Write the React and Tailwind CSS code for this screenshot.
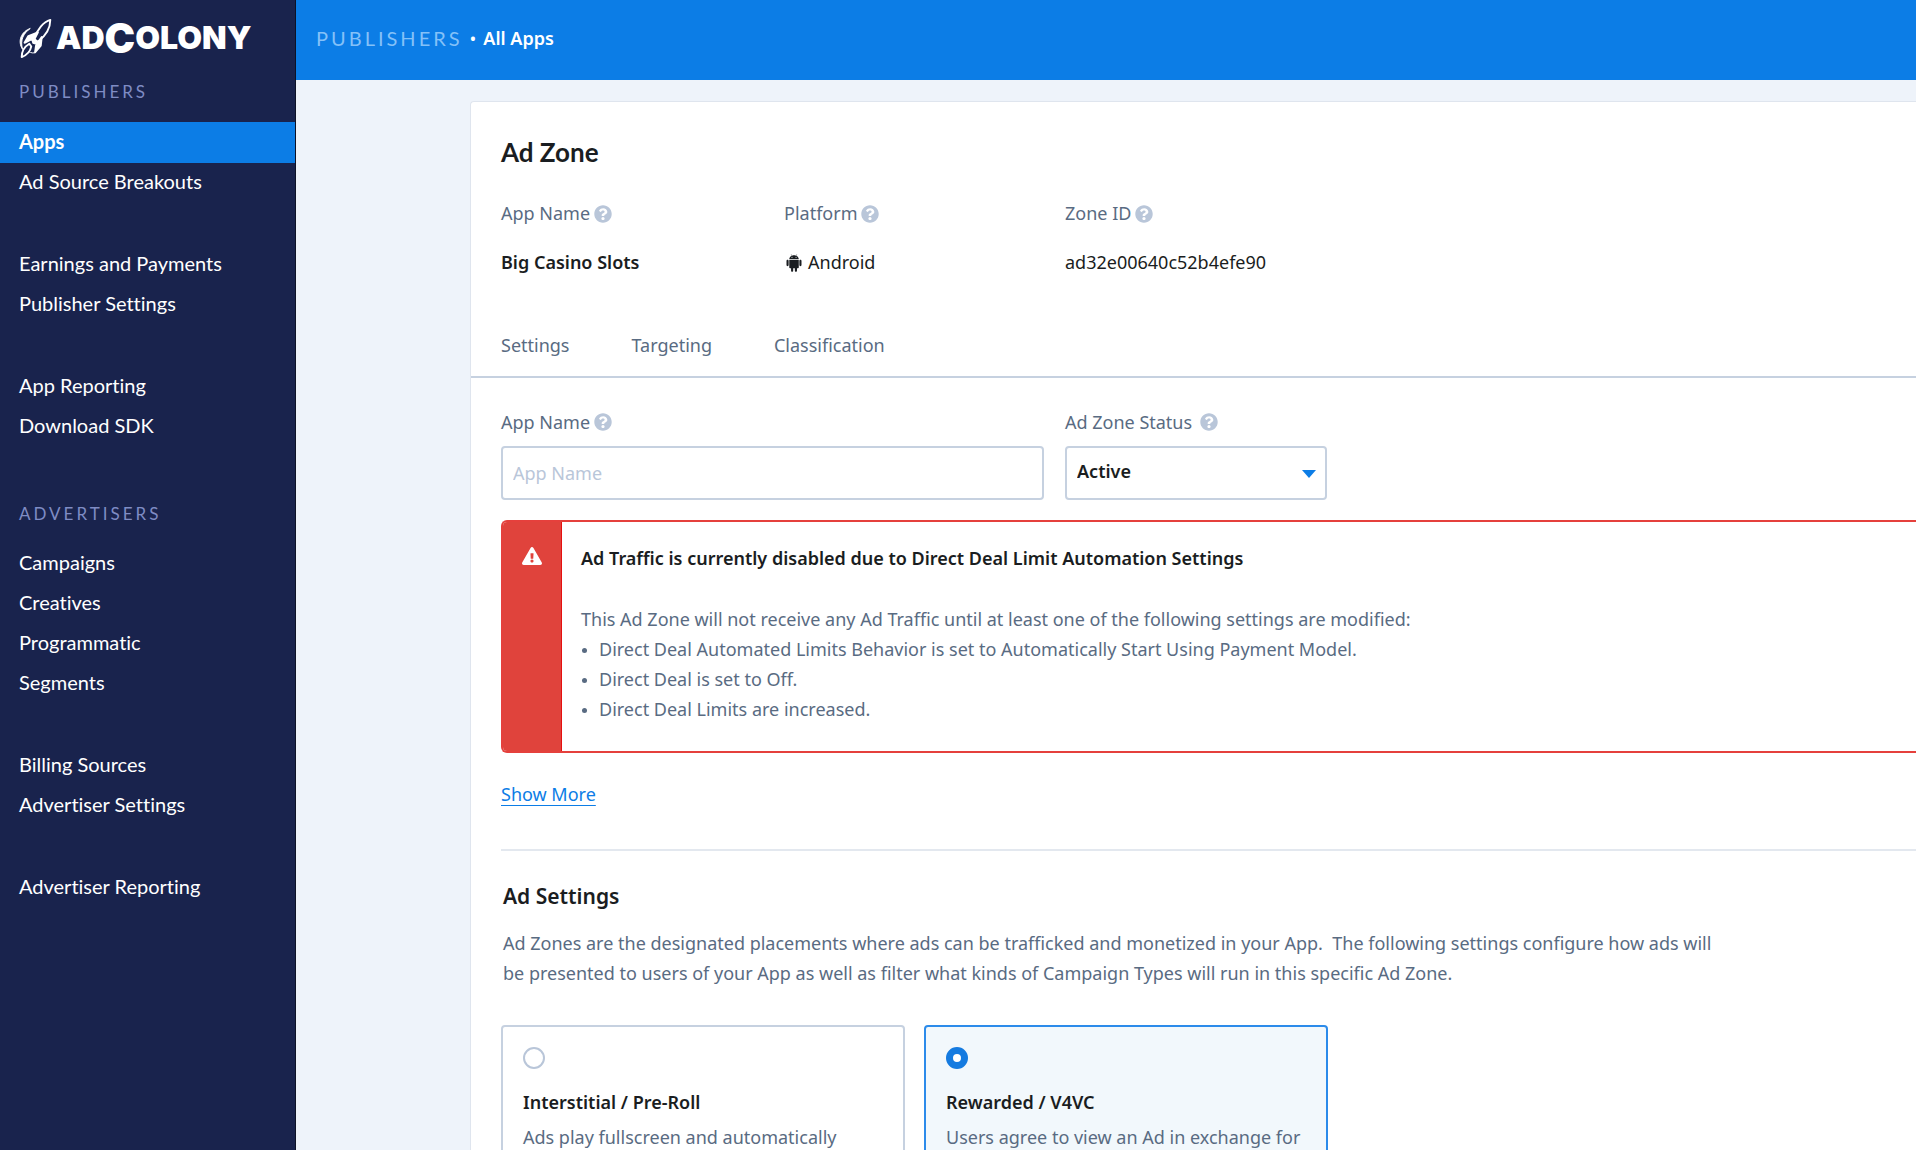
import React, { useState } from 'react';
import { FaQuestionCircle, FaExclamationTriangle } from 'react-icons/fa';
import { AiFillAndroid } from 'react-icons/ai';

const PUBLISHER_GROUPS = [
  ['Apps', 'Ad Source Breakouts'],
  ['Earnings and Payments', 'Publisher Settings'],
  ['App Reporting', 'Download SDK'],
];

const ADVERTISER_GROUPS = [
  ['Campaigns', 'Creatives', 'Programmatic', 'Segments'],
  ['Billing Sources', 'Advertiser Settings'],
  ['Advertiser Reporting'],
];

const AD_TYPES = [
  {
    id: 'interstitial',
    title: 'Interstitial / Pre-Roll',
    text: 'Ads play fullscreen and automatically',
  },
  {
    id: 'rewarded',
    title: 'Rewarded / V4VC',
    text: 'Users agree to view an Ad in exchange for',
  },
];

const Logo = () => (
  <a href="#" className="flex h-[76px] items-center gap-[2px] pl-[18px] text-white" aria-label="AdColony">
    <svg viewBox="0 0 36 44" className="h-[42px] w-9" fill="none" stroke="currentColor" strokeLinejoin="round">
      <path d="M33 3C26 5 19 13 16 23L20 26C28 20 33 12 33 3Z" strokeWidth="2" />
      <path d="M20 16L10 20L6 27L14 23L15 27L21 29L18 30L17 37L23 30L24 21L20 27L16 24Z" fill="currentColor" strokeWidth="2" />
      <path d="M12 12C3 15 -2 25 4 34C1 24 5 17 12 12Z" fill="currentColor" strokeWidth="1" />
      <path d="M11 28C6 31 3 36 3 42C8 40 12 36 13 31Z" strokeWidth="2" />
      <path d="M10 36C13 38 16 38 18 37" strokeWidth="1" />
    </svg>
    <span className="flex items-center font-['Inter',sans-serif] text-[32px] leading-none font-black">
      <span>AD</span>
      <span className="text-[41px] leading-none">C</span>
      <span>OLONY</span>
    </span>
  </a>
);

const NavSection = ({ title, groups, active, onSelect }) => (
  <nav aria-label={title}>
    <h2 className="pl-[19px] text-[17px] leading-8 tracking-[3px] text-[#7f8cc4] uppercase">{title}</h2>
    <div className="flex flex-col gap-[42px] pt-[14px]">
      {groups.map((group) => (
        <ul key={group[0]}>
          {group.map((item) => (
            <li key={item}>
              <a
                href="#"
                onClick={() => onSelect(item)}
                className={
                  item === active
                    ? 'flex h-[41px] items-center bg-[#0c7de6] pb-1 pl-[19px] font-bold'
                    : 'flex h-10 items-center pb-1 pl-[19px]'
                }
              >
                {item}
              </a>
            </li>
          ))}
        </ul>
      ))}
    </div>
  </nav>
);

const Help = () => <FaQuestionCircle className="size-[18px] shrink-0 text-[#b9c6d9]" />;

const Detail = ({ label, children }) => (
  <div>
    <dt className="flex items-center gap-1 text-[#596b82]">
      {label}
      <Help />
    </dt>
    <dd className="mt-[18px] flex items-center gap-1">{children}</dd>
  </div>
);

const App = () => {
  const [activeItem, setActiveItem] = useState('Apps');
  const [appName, setAppName] = useState('');
  const [status, setStatus] = useState('Active');
  const [adType, setAdType] = useState('rewarded');

  return (
    <div className="flex h-screen overflow-hidden bg-[#eef3fa] font-['Noto_Sans',sans-serif] text-lg text-[#1a1d21]">
      {/* Sidebar */}
      <aside className="w-[296px] shrink-0 border-r border-[#0d1226] bg-[#19234d] font-[Lato,sans-serif] text-xl text-white [font-variant-ligatures:none]">
        <Logo />
        <NavSection title="Publishers" groups={PUBLISHER_GROUPS} active={activeItem} onSelect={setActiveItem} />
        <div className="h-[51px]" />
        <NavSection title="Advertisers" groups={ADVERTISER_GROUPS} active={activeItem} onSelect={setActiveItem} />
      </aside>

      <div className="flex min-w-0 flex-1 flex-col">
        <header className="flex h-20 shrink-0 items-center gap-[7px] bg-[#0c7de6] px-5 pb-1 text-white">
          <span className="font-[Lato,sans-serif] text-xl tracking-[3px] text-[#84c1f8] uppercase">Publishers</span>
          <span>•</span>
          <a href="#" className="font-semibold">All Apps</a>
        </header>

        <main className="min-h-0 flex-1 overflow-hidden pt-[21px] pl-[174px]">
          <div className="rounded-tl border-t border-l border-[#dfe5ee] bg-white">
            <div className="pt-[30px] pl-[30px]">
              <h1 className="font-[Lato,sans-serif] text-[26px] leading-10 font-bold">Ad Zone</h1>
              <dl className="mt-[26px] grid grid-cols-[283px_281px_1fr] leading-[31px]">
                <Detail label="App Name">
                  <span className="font-semibold">Big Casino Slots</span>
                </Detail>
                <Detail label="Platform">
                  <AiFillAndroid className="size-5" />
                  Android
                </Detail>
                <Detail label="Zone ID">ad32e00640c52b4efe90</Detail>
              </dl>
            </div>

            {/* Tabs */}
            <div className="mt-9 flex gap-[62px] border-b-2 border-[#c6d1e0] pl-[30px] text-[#596b82]">
              <button type="button" className="h-[62px]">Settings</button>
              <button type="button" className="h-[62px]">Targeting</button>
              <button type="button" className="h-[62px]">Classification</button>
            </div>

            <div className="pt-[29px] pl-[30px] leading-[30px]">
              <div className="flex gap-[21px] text-[#596b82]">
                <div className="w-[543px]">
                  <label htmlFor="app-name" className="flex items-center gap-1">
                    App Name
                    <Help />
                  </label>
                  <input
                    id="app-name"
                    type="text"
                    placeholder="App Name"
                    value={appName}
                    onChange={(e) => setAppName(e.target.value)}
                    className="mt-[9px] h-[54px] w-full rounded border-2 border-[#c6d1e0] px-[10px] placeholder:text-[#b9c6d9]"
                  />
                </div>
                <div className="w-[262px]">
                  <label htmlFor="status" className="flex items-center gap-2">
                    Ad Zone Status
                    <Help />
                  </label>
                  <div className="relative mt-[9px]">
                    <select
                      id="status"
                      value={status}
                      onChange={(e) => setStatus(e.target.value)}
                      className="h-[54px] w-full appearance-none rounded border-2 border-[#c6d1e0] px-[10px] pb-1 font-semibold text-[#1a1d21]"
                    >
                      <option>Active</option>
                      <option>Inactive</option>
                    </select>
                    <svg viewBox="0 0 14 8" className="pointer-events-none absolute top-6 right-[11px] h-2 w-[14px]">
                      <path d="M0 0H14L7 8Z" fill="#0c7de6" />
                    </svg>
                  </div>
                </div>
              </div>

              {/* Disabled traffic warning */}
              <div role="alert" className="mt-5 flex h-[233px] overflow-hidden rounded-l-md border-2 border-r-0 border-[#e5403c]">
                <div className="flex w-[59px] shrink-0 justify-center border-r border-[#e60f0f] bg-[#e0433c] pt-6">
                  <FaExclamationTriangle className="size-5 text-white" />
                </div>
                <div className="pt-[21px] pl-[19px]">
                  <p className="font-semibold">Ad Traffic is currently disabled due to Direct Deal Limit Automation Settings</p>
                  <div className="mt-[31px] text-[#596b82]">
                    <p>This Ad Zone will not receive any Ad Traffic until at least one of the following settings are modified:</p>
                    <ul className="list-disc pl-[18px] marker:text-sm">
                      <li>Direct Deal Automated Limits Behavior is set to Automatically Start Using Payment Model.</li>
                      <li>Direct Deal is set to Off.</li>
                      <li>Direct Deal Limits are increased.</li>
                    </ul>
                  </div>
                </div>
              </div>

              <a href="#" className="mt-[26px] inline-block text-[#0c7de6] underline underline-offset-4">Show More</a>

              <section className="mt-10 border-t-2 border-[#e3e8ef] pt-[29px]">
                <h2 className="pl-0.5 text-[21px] leading-8 font-semibold">Ad Settings</h2>
                <p className="mt-4 max-w-[1230px] pl-0.5 text-[#596b82]">
                  Ad Zones are the designated placements where ads can be trafficked and monetized in your App.&nbsp; The following
                  settings configure how ads will be presented to users of your App as well as filter what kinds of Campaign Types will
                  run in this specific Ad Zone.
                </p>
                <div className="mt-[37px] flex gap-[19px]">
                  {AD_TYPES.map((type) => (
                    <label
                      key={type.id}
                      className={
                        adType === type.id
                          ? 'block min-h-[200px] w-[404px] rounded border-2 border-[#2c8bea] bg-[#f2f8fc] px-5 pt-5'
                          : 'block min-h-[200px] w-[404px] rounded border-2 border-[#c6d1e0] px-5 pt-5'
                      }
                    >
                      <input
                        type="radio"
                        name="ad-type"
                        checked={adType === type.id}
                        onChange={() => setAdType(type.id)}
                        className="block size-[22px] appearance-none rounded-full border-2 border-[#b9c6d9] bg-white checked:border-[7px] checked:border-[#157be0]"
                      />
                      <span className="mt-[18px] block font-semibold">{type.title}</span>
                      <span className="mt-[5px] block whitespace-nowrap text-[#596b82]">{type.text}</span>
                    </label>
                  ))}
                </div>
              </section>
            </div>
          </div>
        </main>
      </div>
    </div>
  );
};

export default App;
